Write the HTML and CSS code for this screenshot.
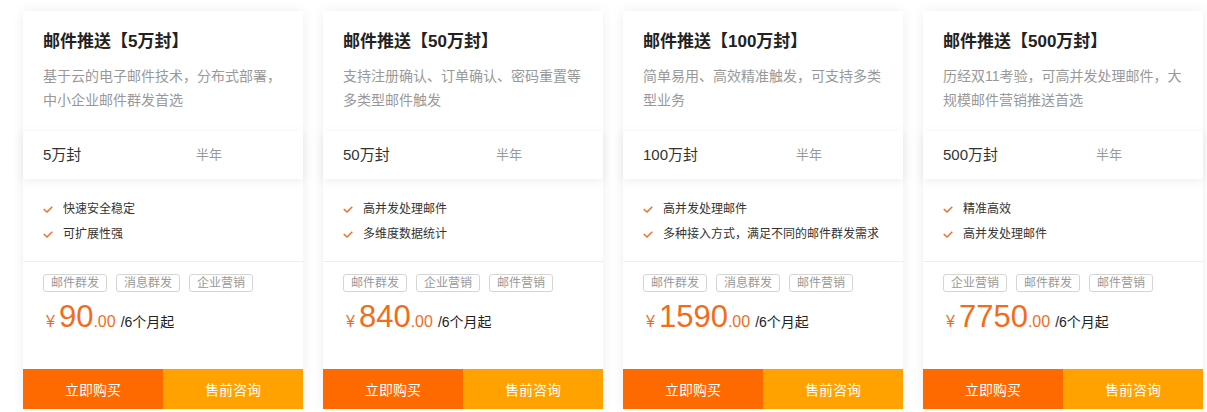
FILE: index.html
```html
<!DOCTYPE html>
<html lang="zh-CN">
<head>
<meta charset="utf-8">
<title>邮件推送</title>
<link rel="stylesheet" href="styles.css">
</head>
<body>
<div class="cards">
  <div class="card">
    <div class="head">
      <h3 class="title">邮件推送【5万封】</h3>
      <p class="desc">基于云的电子邮件技术，分布式部署，中小企业邮件群发首选</p>
    </div>
    <div class="band"><span class="qty">5万封</span><span class="period">半年</span></div>
    <ul class="feats">
      <li><svg class="chk" viewBox="0 0 10 7"><path d="M0.7 3 L4 6 L9.3 0.7"/></svg>快速安全稳定</li>
      <li><svg class="chk" viewBox="0 0 10 7"><path d="M0.7 3 L4 6 L9.3 0.7"/></svg>可扩展性强</li>
    </ul>
    <div class="foot">
      <div class="tags"><span class="tag">邮件群发</span><span class="tag">消息群发</span><span class="tag">企业营销</span></div>
      <div class="price"><span class="yen">¥</span><span class="num">90</span><span class="dec">.00</span><span class="unit">/6个月起</span></div>
    </div>
    <div class="btns"><a class="buy">立即购买</a><a class="ask">售前咨询</a></div>
  </div>
  <div class="card">
    <div class="head">
      <h3 class="title">邮件推送【50万封】</h3>
      <p class="desc">支持注册确认、订单确认、密码重置等多类型邮件触发</p>
    </div>
    <div class="band"><span class="qty">50万封</span><span class="period">半年</span></div>
    <ul class="feats">
      <li><svg class="chk" viewBox="0 0 10 7"><path d="M0.7 3 L4 6 L9.3 0.7"/></svg>高并发处理邮件</li>
      <li><svg class="chk" viewBox="0 0 10 7"><path d="M0.7 3 L4 6 L9.3 0.7"/></svg>多维度数据统计</li>
    </ul>
    <div class="foot">
      <div class="tags"><span class="tag">邮件群发</span><span class="tag">企业营销</span><span class="tag">邮件营销</span></div>
      <div class="price"><span class="yen">¥</span><span class="num">840</span><span class="dec">.00</span><span class="unit">/6个月起</span></div>
    </div>
    <div class="btns"><a class="buy">立即购买</a><a class="ask">售前咨询</a></div>
  </div>
  <div class="card">
    <div class="head">
      <h3 class="title">邮件推送【100万封】</h3>
      <p class="desc">简单易用、高效精准触发，可支持多类型业务</p>
    </div>
    <div class="band"><span class="qty">100万封</span><span class="period">半年</span></div>
    <ul class="feats">
      <li><svg class="chk" viewBox="0 0 10 7"><path d="M0.7 3 L4 6 L9.3 0.7"/></svg>高并发处理邮件</li>
      <li><svg class="chk" viewBox="0 0 10 7"><path d="M0.7 3 L4 6 L9.3 0.7"/></svg>多种接入方式，满足不同的邮件群发需求</li>
    </ul>
    <div class="foot">
      <div class="tags"><span class="tag">邮件群发</span><span class="tag">消息群发</span><span class="tag">邮件营销</span></div>
      <div class="price"><span class="yen">¥</span><span class="num">1590</span><span class="dec">.00</span><span class="unit">/6个月起</span></div>
    </div>
    <div class="btns"><a class="buy">立即购买</a><a class="ask">售前咨询</a></div>
  </div>
  <div class="card">
    <div class="head">
      <h3 class="title">邮件推送【500万封】</h3>
      <p class="desc">历经双11考验，可高并发处理邮件，大规模邮件营销推送首选</p>
    </div>
    <div class="band"><span class="qty">500万封</span><span class="period">半年</span></div>
    <ul class="feats">
      <li><svg class="chk" viewBox="0 0 10 7"><path d="M0.7 3 L4 6 L9.3 0.7"/></svg>精准高效</li>
      <li><svg class="chk" viewBox="0 0 10 7"><path d="M0.7 3 L4 6 L9.3 0.7"/></svg>高并发处理邮件</li>
    </ul>
    <div class="foot">
      <div class="tags"><span class="tag">企业营销</span><span class="tag">邮件群发</span><span class="tag">邮件营销</span></div>
      <div class="price"><span class="yen">¥</span><span class="num">7750</span><span class="dec">.00</span><span class="unit">/6个月起</span></div>
    </div>
    <div class="btns"><a class="buy">立即购买</a><a class="ask">售前咨询</a></div>
  </div>
</div>
</body>
</html>
```
FILE: styles.css
```css
* { box-sizing: border-box; }
html, body { margin: 0; padding: 0; background: #fff; }
body {
  font-family: "Liberation Sans", "Noto Sans CJK SC", sans-serif;
  color: #333;
}
.cards {
  display: flex;
  gap: 20px;
  padding: 11px 0 0 23px;
}
.card {
  width: 280px;
  height: 398px;
  background: #fff;
  box-shadow: 0 0 12px rgba(0, 0, 0, 0.07);
  display: flex;
  flex-direction: column;
}
.head { padding: 19px 20px 0; }
.title {
  margin: 0;
  font-size: 17px;
  line-height: 24px;
  font-weight: bold;
  color: #222;
}
.desc {
  margin: 10px 0 0;
  font-size: 14px;
  line-height: 24px;
  color: #999;
  height: 48px;
}
.band {
  margin-top: 19px;
  height: 48px;
  display: grid;
  grid-template-columns: 153px auto;
  align-items: center;
  padding: 0 20px 3px;
  background: #fff;
  box-shadow: 0 2px 10px rgba(0, 0, 0, 0.07);
  position: relative;
}
.qty { font-size: 15px; color: #333; }
.period { font-size: 13px; color: #999; }
.feats {
  list-style: none;
  margin: 0;
  padding: 18px 20px 14px;
  border-bottom: 1px solid #eee;
}
.feats li {
  display: flex;
  align-items: center;
  font-size: 12px;
  line-height: 25px;
  color: #333;
}
.chk {
  width: 10px;
  height: 7px;
  margin-right: 10px;
  fill: none;
  stroke: #f26a25;
  stroke-width: 1.4;
}
.foot { padding: 12px 20px 0; }
.tags { display: flex; gap: 9px; }
.tag {
  font-size: 12px;
  line-height: 16px;
  padding: 0 7px;
  border: 1px solid #d5d5d5;
  border-radius: 3px;
  color: #999;
}
.price {
  margin-top: 7px;
  line-height: 36px;
  height: 36px;
  white-space: nowrap;
}
.yen { font-size: 16px; color: #f36c1c; margin: 0 4px 0 3px; }
.num { font-size: 31px; color: #f36c1c; }
.dec { font-size: 16px; color: #f36c1c; margin-right: 5px; }
.unit { font-size: 14px; color: #222; }
.btns {
  margin-top: auto;
  display: flex;
  height: 40px;
}
.btns a {
  flex: 1;
  display: flex;
  align-items: center;
  justify-content: center;
  font-size: 14px;
  color: #fff;
  cursor: pointer;
}
.buy { background: #ff6a00; }
.ask { background: #ffa200; color: #fffbe8; }
```
